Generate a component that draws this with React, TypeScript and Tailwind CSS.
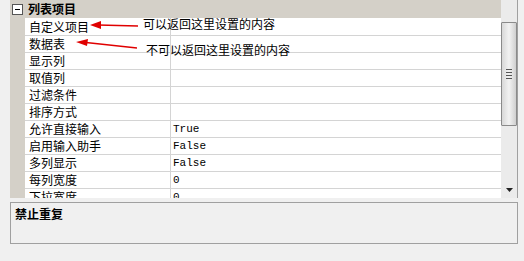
import React from "react";

const rows: [string, string][] = [
  ["自定义项目", ""],
  ["数据表", ""],
  ["显示列", ""],
  ["取值列", ""],
  ["过滤条件", ""],
  ["排序方式", ""],
  ["允许直接输入", "True"],
  ["启用输入助手", "False"],
  ["多列显示", "False"],
  ["每列宽度", "0"],
  ["下拉宽度", "0"],
];

const cjk = "font-['Noto_Sans_CJK_SC','Noto_Sans',sans-serif]";

export default function App() {
  return (
    <div className={`relative w-[524px] h-[261px] bg-[#f0f0f0] overflow-hidden ${cjk} text-[12px] text-black`}>
      {/* property grid */}
      <div className="ml-[10px] w-[508px] h-[198px] flex border-r border-[#a0a0a0] bg-white">
        <div className="w-[491px] h-[198px] overflow-hidden flex flex-col">
          <div className="h-[18px] shrink-0 bg-[#d4d0c8] flex items-center">
            <div className="ml-[2px] w-[11px] h-[11px] border border-[#555] bg-white flex items-center justify-center">
              <div className="w-[5px] h-[1px] bg-black" />
            </div>
            <span className="ml-[5px] font-bold leading-none">列表项目</span>
          </div>
          {rows.map(([name, value], i) => (
            <div key={i} className={`${i === 0 ? "h-[18px]" : "h-[17px]"} shrink-0 flex`}>
              <div className="w-[15px] shrink-0 bg-[#d4d0c8]" />
              <div className="flex-1 flex border-b border-[#d4d4d4]">
                <div className="w-[146px] shrink-0 border-r border-[#d4d4d4] pl-[4px] flex items-center leading-none">
                  {name}
                </div>
                <div className="flex-1 pl-[2px] flex items-center font-['Liberation_Mono',monospace] text-[11px] leading-none">
                  {value}
                </div>
              </div>
            </div>
          ))}
        </div>
        {/* scrollbar */}
        <div className="w-[16px] h-[198px] bg-[#ebebeb] flex flex-col">
          <div className="h-[22px] shrink-0" />
          <div className="h-[104px] shrink-0 border border-[#8a8a8a] rounded-[1px] bg-gradient-to-r from-[#d8d8d8] via-[#f2f2f2] to-[#cfcfcf] flex flex-col items-center justify-center gap-[2px]">
            <div className="w-[6px] h-[1px] bg-[#555]" />
            <div className="w-[6px] h-[1px] bg-[#555]" />
            <div className="w-[6px] h-[1px] bg-[#555]" />
            <div className="w-[6px] h-[1px] bg-[#555]" />
          </div>
          <div className="flex-1" />
          <div className="h-[17px] shrink-0 flex items-center justify-center">
            <svg width="7" height="4" viewBox="0 0 7 4">
              <polygon points="0,0 7,0 3.5,4" fill="#222" />
            </svg>
          </div>
        </div>
      </div>
      {/* description */}
      <div className="ml-[10px] mt-[4px] w-[508px] h-[42px] border border-[#a0a0a0] bg-[#f0f0f0] px-[4px] pt-[2px]">
        <span className="font-bold leading-none">禁止重复</span>
      </div>

      {/* annotations */}
      <svg className="absolute left-0 top-0" width="524" height="261">
        <line x1="98" y1="25" x2="138" y2="26" stroke="#e00000" strokeWidth="1.5" />
        <polygon points="90,25 101,21 101,29" fill="#e00000" />
        <line x1="86" y1="42.5" x2="137" y2="48" stroke="#e00000" strokeWidth="1.5" />
        <polygon points="76,42 88,39 87,46" fill="#e00000" />
      </svg>
      <span className="absolute left-[143px] top-[18px] leading-none">可以返回这里设置的内容</span>
      <span className="absolute left-[146px] top-[44px] leading-none">不可以返回这里设置的内容</span>
    </div>
  );
}
